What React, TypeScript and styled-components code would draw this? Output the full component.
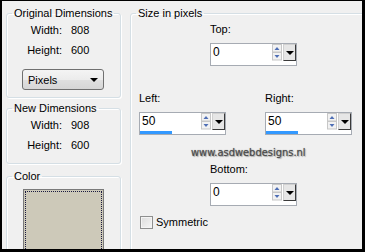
import React from "react";
import styled, { createGlobalStyle } from "styled-components";

const Global = createGlobalStyle`
  html, body { margin: 0; padding: 0; background: #000; }
  body { font-family: "Liberation Sans", Arial, sans-serif; font-size: 11px; color: #000; }
`;

const Frame = styled.div`
  width: 365px;
  height: 252px;
  box-sizing: border-box;
  padding: 1px 3px 3px 2px;
  background: #000;
`;

const Panel = styled.div`
  width: 360px;
  height: 248px;
  background: #f0f0f0;
  overflow: hidden;
  display: flex;
  align-items: flex-start;
  padding-left: 4px;
  box-sizing: border-box;
`;

const LeftCol = styled.div`
  width: 115px;
  flex: none;
  display: flex;
  flex-direction: column;
  padding-top: 6px;
`;

const Group = styled.fieldset<{ $mt?: number; $h?: number }>`
  margin: ${(p) => p.$mt ?? 0}px 0 0 0;
  padding: 0;
  border: 1px solid #d5dfe5;
  border-radius: 3px;
  box-shadow: inset 1px 1px 0 #fff, 1px 1px 0 #fff;
  min-inline-size: 0;
  height: ${(p) => (p.$h ? `${p.$h}px` : "auto")};
  box-sizing: border-box;
`;

const Legend = styled.legend`
  margin-left: 5px;
  padding: 0 2px;
  font-size: 11px;
  line-height: 13px;
  height: 13px;
`;

const InfoGrid = styled.div`
  display: grid;
  grid-template-columns: 55px auto;
  column-gap: 9px;
  row-gap: 7px;
  padding-top: 4px;
  line-height: 13px;
  font-size: 11px;
`;

const Label = styled.span`
  text-align: right;
`;

const Value = styled.span``;

const Dropdown = styled.div`
  margin: 12px 0 0 15px;
  width: 82px;
  height: 21px;
  box-sizing: border-box;
  border: 1px solid #707070;
  border-radius: 3px;
  background: linear-gradient(#f4f4f4 0%, #ececec 50%, #e0e0e0 51%, #d6d6d6 100%);
  display: flex;
  align-items: center;
  justify-content: space-between;
  padding: 0 5px 0 5px;
  font-size: 11px;
`;

const Caret = styled.span`
  width: 0;
  height: 0;
  border-left: 4px solid transparent;
  border-right: 4px solid transparent;
  border-top: 4px solid #000;
`;

const Swatch = styled.div`
  margin: 6px 0 0 16px;
  width: 81px;
  height: 70px;
  box-sizing: border-box;
  border: 1px solid #7a7a7a;
  background: #cdc9b9;
  padding: 1px;
`;

const SwatchFocus = styled.div`
  width: 100%;
  height: 100%;
  box-sizing: border-box;
  border: 1px dotted #1a1a40;
`;

const RightGroup = styled(Group)`
  margin: 6px 0 0 9px;
  width: 245px;
  height: 260px;
  flex: none;
`;

const RightBody = styled.div`
  display: flex;
  flex-direction: column;
  padding-top: 2px;
`;

const Field = styled.div<{ $ml: number; $mt?: number }>`
  display: flex;
  flex-direction: column;
  gap: 7px;
  margin-left: ${(p) => p.$ml}px;
  margin-top: ${(p) => p.$mt ?? 0}px;
  width: 87px;
`;

const FieldLabel = styled.span`
  line-height: 14px;
  font-size: 11px;
`;

const SideRow = styled.div`
  display: flex;
  gap: 39px;
  margin: 25px 0 0 8px;
`;

const Box = styled.div`
  width: 87px;
  height: 23px;
  box-sizing: border-box;
  border: 1px solid #a6abb3;
  background: #fff;
  display: flex;
  flex-direction: column;
`;

const BoxTop = styled.div`
  display: flex;
  height: 17px;
`;

const BoxText = styled.div`
  flex: 1;
  padding-left: 2px;
  font-size: 12px;
  line-height: 17px;
`;

const SpinWrap = styled.div`
  width: 10px;
  margin-right: 1px;
  display: flex;
  align-items: center;
`;

const DropBtn = styled.div`
  width: 13px;
  height: 17px;
  box-sizing: border-box;
  border: 1px solid #3a3a3a;
  border-top-color: #d0d0d0;
  border-left-color: #d0d0d0;
  background: #e6e6e6;
  display: flex;
  align-items: center;
  justify-content: center;
`;

const BarTrack = styled.div`
  height: 4px;
  display: flex;
`;

const Bar = styled.div`
  height: 3px;
  margin-top: 1px;
  background: #3399ff;
`;

const Watermark = styled.div`
  margin: 11px 0 0 60px;
  font-family: "Liberation Sans Narrow", "DejaVu Sans Condensed", "Liberation Sans", sans-serif;
  font-stretch: condensed;
  font-size: 11px;
  line-height: 14px;
  color: #4a4a4a;
  text-shadow: 0 0 1px #777, 1px 1px 1px #aaa;
`;

const CheckRow = styled.label`
  display: flex;
  align-items: center;
  gap: 3px;
  margin: 10px 0 0 9px;
  font-size: 11px;
  line-height: 13px;
`;

const CheckBox = styled.span`
  width: 13px;
  height: 13px;
  box-sizing: border-box;
  border: 1px solid #8e8f8f;
  background: linear-gradient(135deg, #dcdcdc, #f6f6f6);
  box-shadow: inset 0 0 0 1px #f4f4f4;
`;

const Spin = () => (
  <svg width="10" height="17" viewBox="0 0 10 17">
    <rect x="0.5" y="0.5" width="9" height="7.5" fill="#f2f2f2" stroke="#c7c7c7" />
    <rect x="0.5" y="8.5" width="9" height="7.5" fill="#f2f2f2" stroke="#c7c7c7" />
    <path d="M2.5 6 L5 3 L7.5 6 Z" fill="#4f6fb5" />
    <path d="M2.5 11 L5 14 L7.5 11 Z" fill="#4f6fb5" />
  </svg>
);

const SpinBox = ({ value, pct }: { value: string; pct: number }) => (
  <Box>
    <BoxTop>
      <BoxText>{value}</BoxText>
      <SpinWrap>
        <Spin />
      </SpinWrap>
      <DropBtn>
        <Caret />
      </DropBtn>
    </BoxTop>
    <BarTrack>{pct > 0 && <Bar style={{ width: `${pct}%` }} />}</BarTrack>
  </Box>
);

export default function App() {
  return (
    <>
      <Global />
      <Frame>
        <Panel>
          <LeftCol>
            <Group $h={91}>
              <Legend>Original Dimensions</Legend>
              <InfoGrid>
                <Label>Width:</Label>
                <Value>808</Value>
                <Label>Height:</Label>
                <Value>600</Value>
              </InfoGrid>
              <Dropdown>
                <span>Pixels</span>
                <Caret />
              </Dropdown>
            </Group>
            <Group $mt={4} $h={62}>
              <Legend>New Dimensions</Legend>
              <InfoGrid>
                <Label>Width:</Label>
                <Value>908</Value>
                <Label>Height:</Label>
                <Value>600</Value>
              </InfoGrid>
            </Group>
            <Group $mt={6} $h={100}>
              <Legend>Color</Legend>
              <Swatch>
                <SwatchFocus />
              </Swatch>
            </Group>
          </LeftCol>
          <RightGroup>
            <Legend>Size in pixels</Legend>
            <RightBody>
              <Field $ml={79}>
                <FieldLabel>Top:</FieldLabel>
                <SpinBox value="0" pct={0} />
              </Field>
              <SideRow>
                <Field $ml={0}>
                  <FieldLabel>Left:</FieldLabel>
                  <SpinBox value="50" pct={38} />
                </Field>
                <Field $ml={0}>
                  <FieldLabel>Right:</FieldLabel>
                  <SpinBox value="50" pct={38} />
                </Field>
              </SideRow>
              <Watermark>www.asdwebdesigns.nl</Watermark>
              <Field $ml={79} $mt={2}>
                <FieldLabel>Bottom:</FieldLabel>
                <SpinBox value="0" pct={0} />
              </Field>
              <CheckRow>
                <CheckBox />
                Symmetric
              </CheckRow>
            </RightBody>
          </RightGroup>
        </Panel>
      </Frame>
    </>
  );
}
